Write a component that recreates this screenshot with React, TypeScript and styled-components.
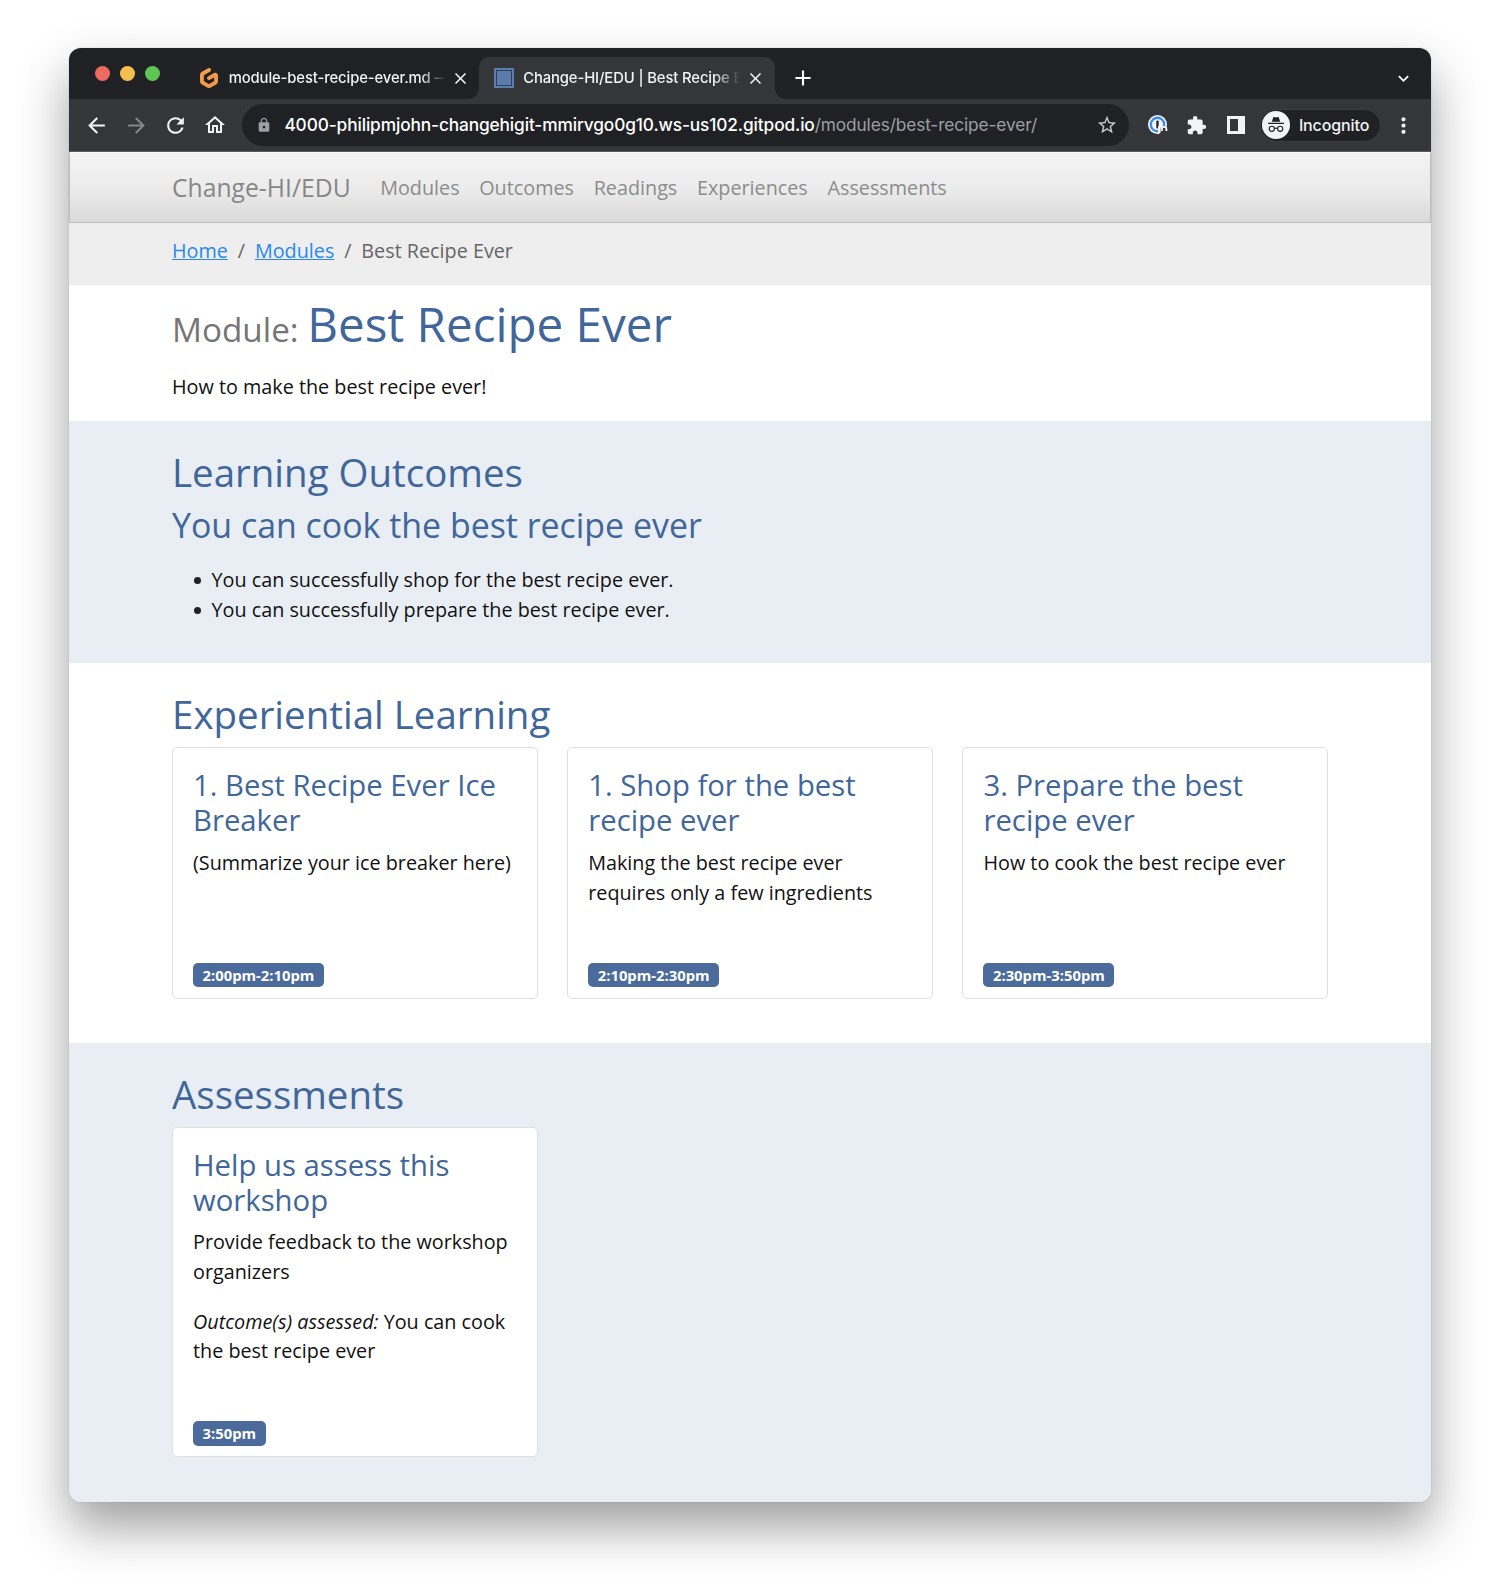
import React from "react";
import styled, { createGlobalStyle, css } from "styled-components";
import {
  MdArrowBack,
  MdArrowForward,
  MdRefresh,
  MdOutlineHome,
  MdLock,
  MdStarBorder,
  MdExtension,
  MdClose,
  MdAdd,
  MdKeyboardArrowDown,
  MdMoreVert,
} from "react-icons/md";
import { SiGitpod } from "react-icons/si";

const Global = createGlobalStyle`
  *, *::before, *::after { box-sizing: border-box; }
  html { font-size: 19.77px; }
  body {
    margin: 0;
    background: #fff;
    color: #111;
    font-family: "Open Sans", "Noto Sans", sans-serif;
    font-size: 1rem;
    line-height: 1.5;
  }
`;

const Desktop = styled.div`
  height: 1594px;
  padding: 48px 69px 0;
  overflow: hidden;
`;

const Window = styled.div`
  height: 1454px;
  border-radius: 12px;
  overflow: hidden;
  background: #fff;
  box-shadow: 0 0 1px rgba(0, 0, 0, 0.45), 0 25px 50px rgba(0, 0, 0, 0.38);
`;

const chromeFont = css`
  font-family: Inter, sans-serif;
  font-weight: 500;
  white-space: nowrap;
`;

const TabStrip = styled.div`
  display: flex;
  align-items: flex-end;
  height: 51px;
  background: #202124;
`;

const Lights = styled.div`
  display: flex;
  gap: 9.8px;
  align-self: center;
  margin: 0 0 0 26px;
`;

const Light = styled.span<{ $color: string }>`
  width: 15px;
  height: 15px;
  border-radius: 50%;
  background: ${(p) => p.$color};
`;

const Tab = styled.div<{ $active?: boolean }>`
  ${chromeFont}
  position: relative;
  display: flex;
  align-items: center;
  height: 42px;
  color: #f1f3f4;
  font-size: 14.8px;
  border-radius: 10px 10px 0 0;
  ${(p) =>
    p.$active
      ? css`
          width: 296px;
          padding-left: 15px;
          background: #35363a;
          &::before,
          &::after {
            content: "";
            position: absolute;
            bottom: 0;
            width: 10px;
            height: 10px;
          }
          &::before {
            left: -10px;
            background: radial-gradient(circle at 0 0, transparent 9.5px, #35363a 10px);
          }
          &::after {
            right: -10px;
            background: radial-gradient(circle at 100% 0, transparent 9.5px, #35363a 10px);
          }
        `
      : css`
          width: 280px;
          margin-left: 39.6px;
        `}
`;

const TabTitle = styled.span<{ $width: number; $gap: number }>`
  width: ${(p) => p.$width}px;
  margin-left: ${(p) => p.$gap}px;
  letter-spacing: -0.11px;
  overflow: hidden;
  mask-image: linear-gradient(to right, #000 calc(100% - 26px), transparent);
`;

const TabClose = styled.span<{ $gap: number }>`
  display: flex;
  margin-left: ${(p) => p.$gap}px;
`;

const Favicon = styled.span`
  width: 20px;
  height: 20px;
  border: 1px solid #5a7cae;
  background: #5c7ba8;
  padding: 1px;
  &::before {
    content: "";
    display: block;
    height: 100%;
    border: 1px solid #2b3f5f;
  }
`;

const NewTab = styled.span`
  display: flex;
  align-items: center;
  height: 42px;
  margin-left: 14.5px;
  color: #fff;
`;

const TabSearch = styled(NewTab)`
  margin: 0 17px 0 auto;
`;

const Toolbar = styled.div`
  display: flex;
  align-items: center;
  height: 53px;
  padding: 0 14px 0 15px;
  background: #35363a;
  border-bottom: 1px solid #5a5a5c;
`;

const NavIcon = styled.span<{ $dim?: boolean }>`
  display: flex;
  width: 39.6px;
  color: ${(p) => (p.$dim ? "#85868a" : "#f1f3f4")};
`;

const Omnibox = styled.div`
  ${chromeFont}
  display: flex;
  align-items: center;
  width: 887px;
  height: 42px;
  padding: 0 11px 0 14px;
  border-radius: 21px;
  background: #202124;
  color: #fff;
  font-size: 17.3px;
  letter-spacing: -0.12px;
`;

const Url = styled.span`
  flex: 1;
  margin-left: 12px;
`;

const UrlPath = styled.span`
  color: #9aa0a6;
  font-weight: 400;
`;

const ExtIcon = styled.span<{ $left: number }>`
  display: flex;
  margin-left: ${(p) => p.$left}px;
  color: #f1f3f4;
`;

const Incognito = styled.div`
  ${chromeFont}
  display: flex;
  align-items: center;
  width: 121px;
  height: 33px;
  margin-left: 14.5px;
  padding-left: 1px;
  border: 1px solid #3c3d41;
  border-radius: 17px;
  background: #202124;
  color: #f1f3f4;
  font-size: 16px;
  letter-spacing: -0.12px;
`;

const IncognitoLabel = styled.span`
  margin-left: 9px;
`;

const Container = styled.div`
  width: 1156px;
  margin-left: 103px;
`;

const Navbar = styled.nav`
  height: 71px;
  border: 1px solid #bdbdbd;
  border-top: 1px solid #fafafa;
  background: linear-gradient(#f3f3f3, #ececec 50%, #dadada);
`;

const NavInner = styled(Container)`
  display: flex;
  align-items: center;
  height: 100%;
  margin-left: 102px;
`;

const Brand = styled.span`
  margin-right: 29.5px;
  color: #888;
  font-size: 1.25rem;
  white-space: nowrap;
`;

const NavLink = styled.span`
  margin-right: 19.7px;
  color: #8c8c8c;
  white-space: nowrap;
`;

const BreadcrumbBar = styled.div`
  height: 62px;
  padding-top: 12.5px;
  background: #eeeeee;
`;

const Breadcrumb = styled(Container)`
  display: flex;
  color: #666;
`;

const Crumb = styled.span`
  & + &::before {
    content: "/";
    padding: 0 9.9px;
  }
`;

const CrumbLink = styled.a`
  color: #2888f0;
  text-decoration: underline;
`;

const Section = styled.section<{ $height: number; $top: number; $tint?: boolean }>`
  height: ${(p) => p.$height}px;
  padding-top: ${(p) => p.$top}px;
  background: ${(p) => (p.$tint ? "#e9eef5" : "#fff")};
`;

const heading = css`
  margin: 0 0 9.5px;
  color: #41669a;
  font-weight: 400;
  line-height: 1.2;
`;

const Title = styled.h1`
  ${heading}
  margin-bottom: 1rem;
  font-size: 2.406rem;
`;

const Prefix = styled.small`
  color: #757575;
  font-size: 0.7em;
`;

const Heading = styled.h2`
  ${heading}
  font-size: 1.946rem;
`;

const Outcome = styled.h3`
  ${heading}
  font-size: 1.715rem;
`;

const Text = styled.p`
  margin: 0 0 1rem;
`;

const List = styled.ul`
  margin: 19.6px 0 0;
  padding-left: 39.5px;
  list-style: none;
`;

const ListItem = styled.li`
  &::before {
    content: "";
    display: inline-block;
    width: 7px;
    height: 7px;
    margin: 0 11px 3px -18px;
    border-radius: 50%;
    background: #222;
  }
`;

const Cards = styled.div`
  display: grid;
  grid-template-columns: repeat(3, 1fr);
  gap: 29.7px;
`;

const Card = styled.article<{ $height: number }>`
  display: flex;
  flex-direction: column;
  align-items: flex-start;
  height: ${(p) => p.$height}px;
  padding: 20px 20px 10.5px;
  border: 1px solid #dfdfdf;
  border-radius: 5px;
  background: #fff;
`;

const CardTitle = styled.h4`
  ${heading}
  font-size: 1.482rem;
`;

const Badge = styled.span`
  margin-top: auto;
  height: 24.5px;
  padding: 0 9.5px;
  border-radius: 5px;
  background: #4a6b9b;
  color: #fff;
  font-size: 0.75rem;
  font-weight: 700;
  line-height: 24.5px;
  white-space: nowrap;
`;

const PasswordIcon = () => (
  <svg width="20" height="20" viewBox="0 0 20 20">
    <circle cx="9.5" cy="9.5" r="9.5" fill="#f4f6f8" />
    <circle cx="9.5" cy="9.5" r="6.7" fill="none" stroke="#3f8cf0" strokeWidth="2.4" />
    <rect x="8.3" y="5.6" width="2.4" height="7.8" rx="1" fill="#26282c" />
    <path d="M12.5 12.5h7.5v7.5h-9.5z" fill="#35363a" />
    <path d="M10 11v8.6l2.6-2.2V12z" fill="#f4f6f8" />
    <path d="M13.8 16v-1.8a2.3 2.3 0 0 1 4.6 0V16" fill="none" stroke="#f4f6f8" strokeWidth="1.9" />
  </svg>
);

const SidePanelIcon = () => (
  <svg width="18" height="18" viewBox="0 0 18 18">
    <path fillRule="evenodd" fill="currentColor" d="M0 0h18v18H0zM3 3v12h8V3z" />
  </svg>
);

const IncognitoIcon = () => (
  <svg width="28" height="28" viewBox="0 0 28 28">
    <circle cx="14" cy="14" r="14" fill="#f1f3f4" />
    <path d="M9.8 10.8l1.3-4q.3-.9 1.2-.7l1.7.5 1.7-.5q.9-.2 1.2.7l1.3 4z" fill="#202124" />
    <path d="M6 12.4h16" stroke="#202124" strokeWidth="1.1" />
    <g fill="none" stroke="#202124" strokeWidth="1.1">
      <circle cx="9.8" cy="17.8" r="2.6" />
      <circle cx="18.2" cy="17.8" r="2.6" />
      <path d="M12.4 17.5q1.6-.8 3.2 0" />
    </g>
  </svg>
);

const experiences = [
  { title: "1. Best Recipe Ever Ice Breaker", text: "(Summarize your ice breaker here)", time: "2:00pm-2:10pm" },
  { title: "1. Shop for the best recipe ever", text: "Making the best recipe ever requires only a few ingredients", time: "2:10pm-2:30pm" },
  { title: "3. Prepare the best recipe ever", text: "How to cook the best recipe ever", time: "2:30pm-3:50pm" },
];

const navLinks = ["Modules", "Outcomes", "Readings", "Experiences", "Assessments"];

export default function App() {
  return (
    <>
      <Global />
      <Desktop>
        <Window>
          <TabStrip>
            <Lights>
              <Light $color="#ed6a5e" />
              <Light $color="#f5bf4f" />
              <Light $color="#61c554" />
            </Lights>
            <Tab>
              <SiGitpod size={20} color="#f2994a" />
              <TabTitle $width={217} $gap={9.5}>
                module-best-recipe-ever.md — philipmjohn
              </TabTitle>
              <TabClose $gap={5}><MdClose size={19} /></TabClose>
            </Tab>
            <Tab $active>
              <Favicon />
              <TabTitle $width={217} $gap={9}>
                Change-HI/EDU | Best Recipe Ever
              </TabTitle>
              <TabClose $gap={6}><MdClose size={19} /></TabClose>
            </Tab>
            <NewTab><MdAdd size={26} /></NewTab>
            <TabSearch><MdKeyboardArrowDown size={21} /></TabSearch>
          </TabStrip>

          <Toolbar>
            <NavIcon><MdArrowBack size={25} /></NavIcon>
            <NavIcon $dim><MdArrowForward size={25} /></NavIcon>
            <NavIcon><MdRefresh size={25} /></NavIcon>
            <NavIcon><MdOutlineHome size={24} /></NavIcon>
            <Omnibox>
              <MdLock size={16} color="#9aa0a6" />
              <Url>
                4000-philipmjohn-changehigit-mmirvgo0g10.ws-us102.gitpod.io
                <UrlPath>/modules/best-recipe-ever/</UrlPath>
              </Url>
              <MdStarBorder size={22} color="#c4c7cb" />
            </Omnibox>
            <ExtIcon $left={19}><PasswordIcon /></ExtIcon>
            <ExtIcon $left={18}><MdExtension size={21} /></ExtIcon>
            <ExtIcon $left={20}><SidePanelIcon /></ExtIcon>
            <Incognito>
              <IncognitoIcon />
              <IncognitoLabel>Incognito</IncognitoLabel>
            </Incognito>
            <ExtIcon $left={10.5}><MdMoreVert size={25} /></ExtIcon>
          </Toolbar>

          <Navbar>
            <NavInner>
              <Brand>Change-HI/EDU</Brand>
              {navLinks.map((label) => (
                <NavLink key={label}>{label}</NavLink>
              ))}
            </NavInner>
          </Navbar>

          <BreadcrumbBar>
            <Breadcrumb>
              <Crumb><CrumbLink>Home</CrumbLink></Crumb>
              <Crumb><CrumbLink>Modules</CrumbLink></Crumb>
              <Crumb>Best Recipe Ever</Crumb>
            </Breadcrumb>
          </BreadcrumbBar>

          <Section $height={136} $top={10}>
            <Container>
              <Title>
                <Prefix>Module: </Prefix>Best Recipe Ever
              </Title>
              <Text>How to make the best recipe ever!</Text>
            </Container>
          </Section>

          <Section $height={242.4} $top={28} $tint>
            <Container>
              <Heading>Learning Outcomes</Heading>
              <Outcome>You can cook the best recipe ever</Outcome>
              <List>
                <ListItem>You can successfully shop for the best recipe ever.</ListItem>
                <ListItem>You can successfully prepare the best recipe ever.</ListItem>
              </List>
            </Container>
          </Section>

          <Section $height={379.6} $top={28}>
            <Container>
              <Heading>Experiential Learning</Heading>
              <Cards>
                {experiences.map((item) => (
                  <Card key={item.title} $height={251.7}>
                    <CardTitle>{item.title}</CardTitle>
                    <Text>{item.text}</Text>
                    <Badge>{item.time}</Badge>
                  </Card>
                ))}
              </Cards>
            </Container>
          </Section>

          <Section $height={460} $top={28} $tint>
            <Container>
              <Heading>Assessments</Heading>
              <Cards>
                <Card $height={330.6}>
                  <CardTitle>Help us assess this workshop</CardTitle>
                  <Text>Provide feedback to the workshop organizers</Text>
                  <Text>
                    <em>Outcome(s) assessed:</em> You can cook the best recipe ever
                  </Text>
                  <Badge>3:50pm</Badge>
                </Card>
              </Cards>
            </Container>
          </Section>
        </Window>
      </Desktop>
    </>
  );
}
